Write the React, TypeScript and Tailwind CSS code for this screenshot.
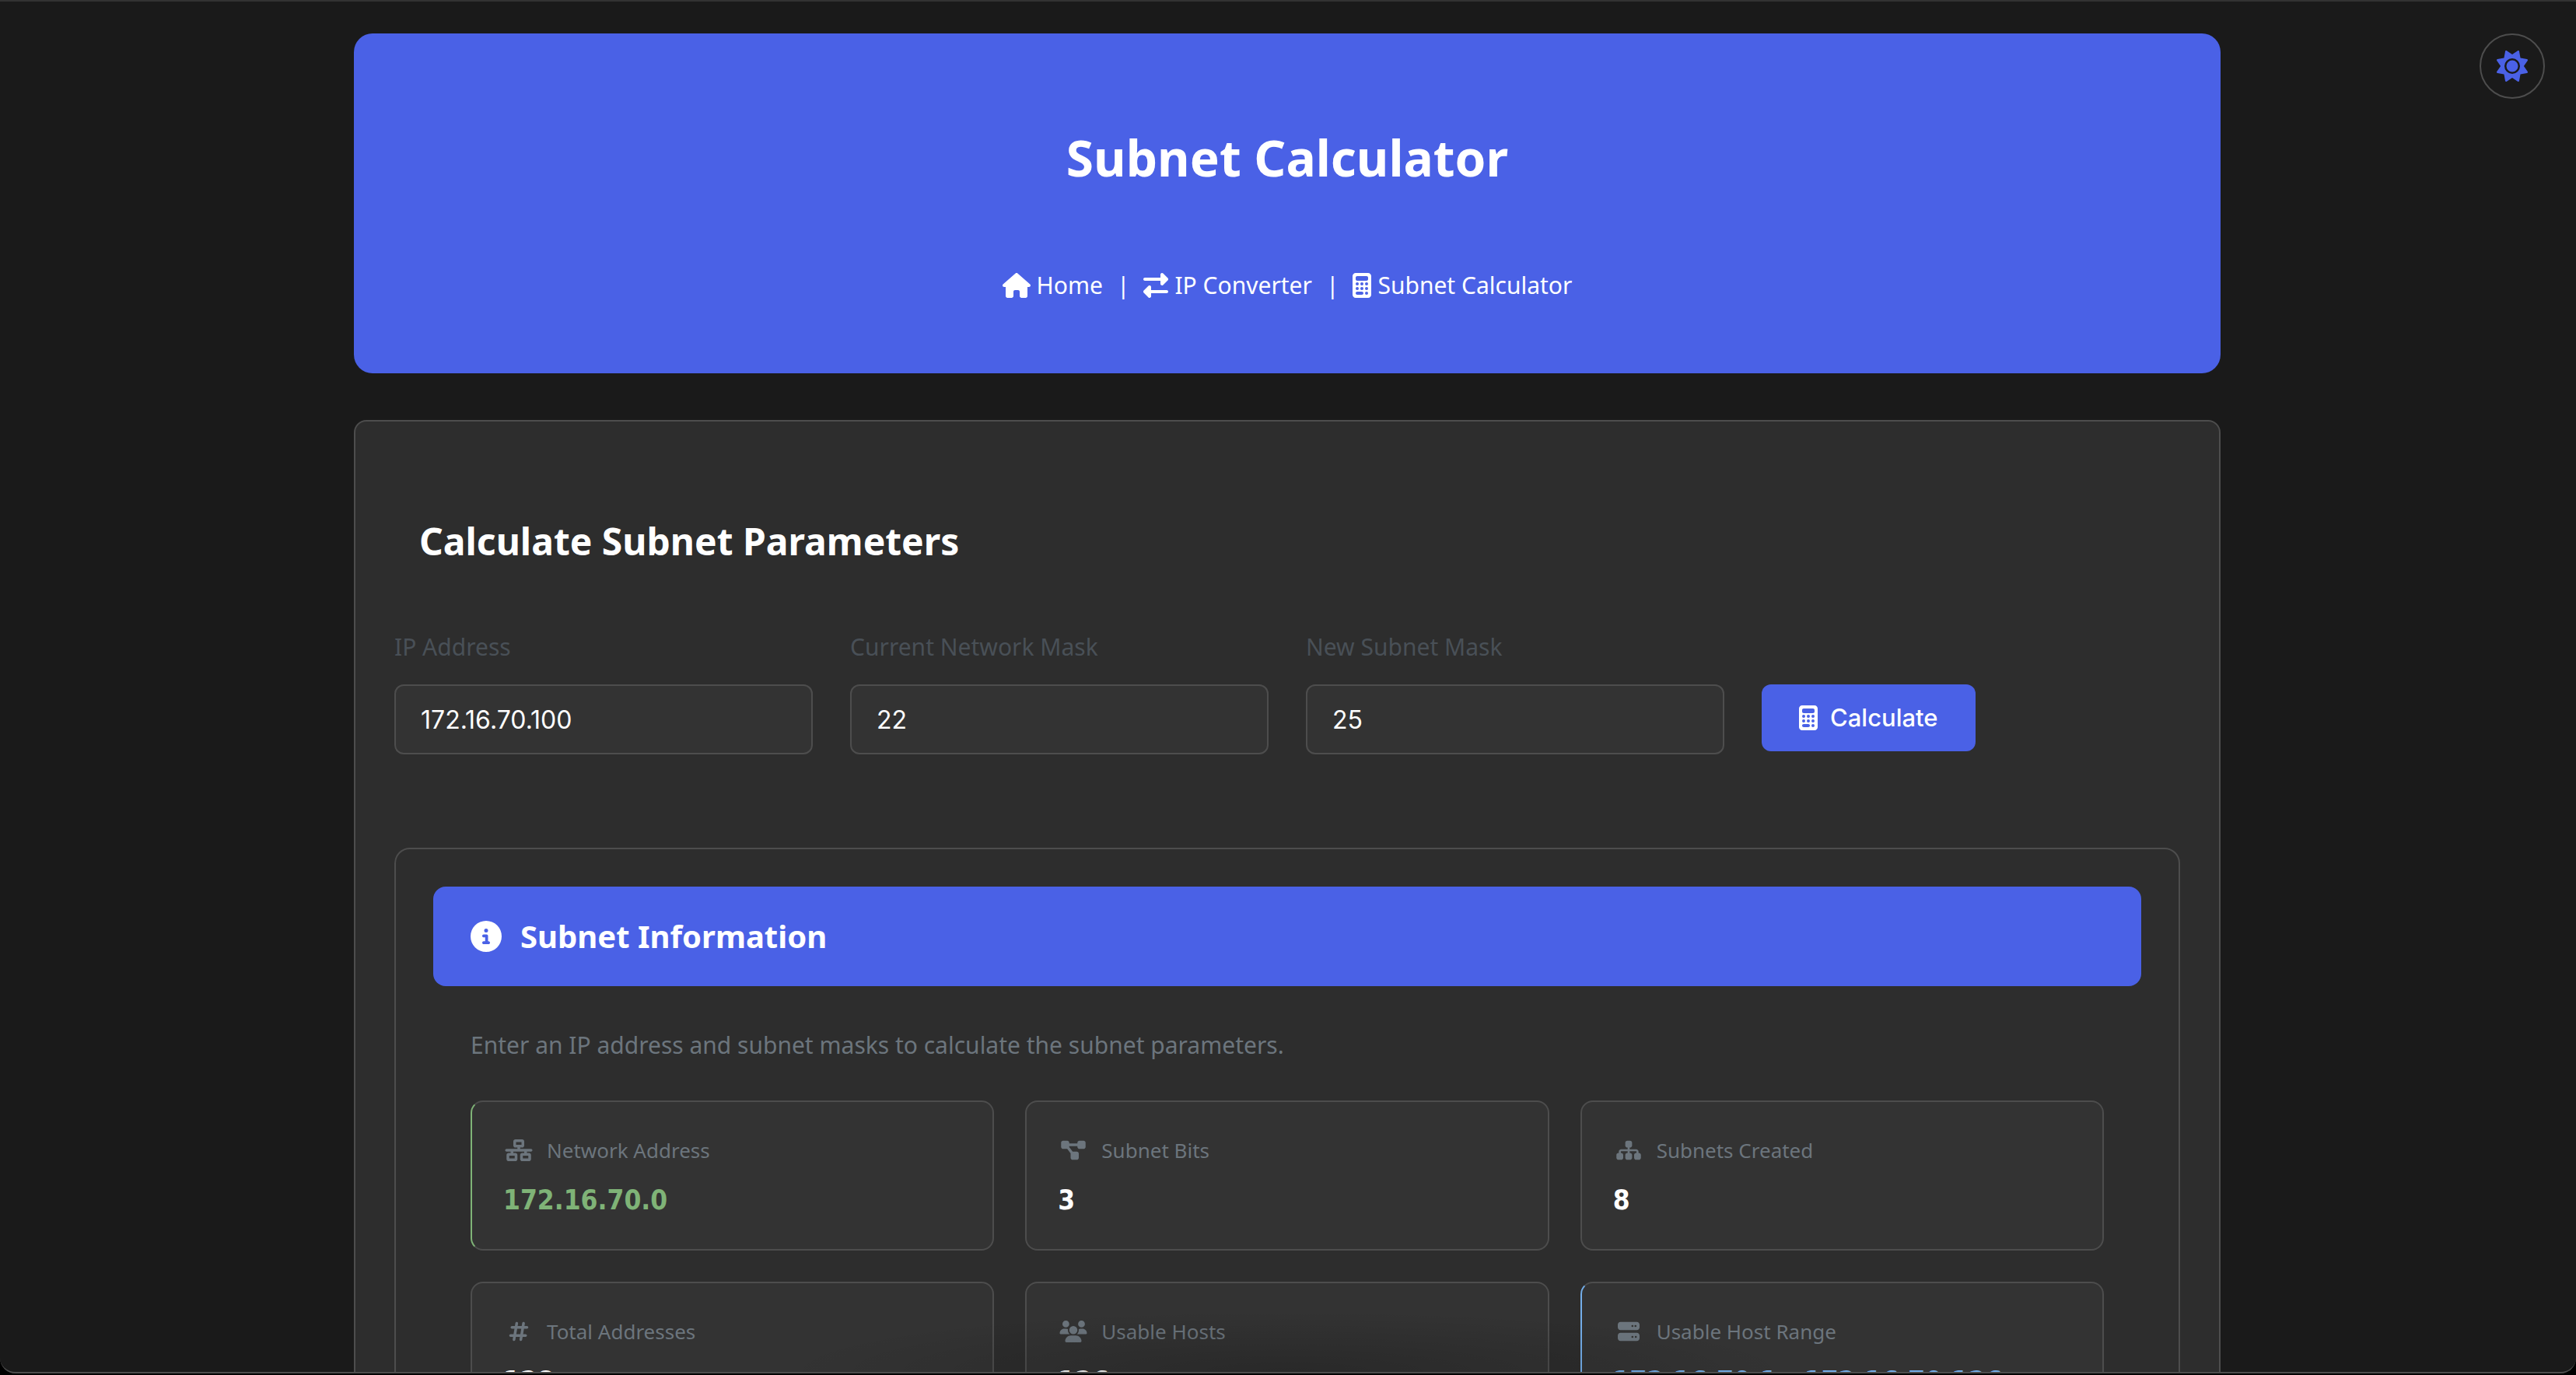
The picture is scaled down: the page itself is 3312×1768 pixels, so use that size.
import type { ComponentType } from "react";
import {
  FaCalculator,
  FaCircleInfo,
  FaDiagramProject,
  FaHashtag,
  FaHouse,
  FaNetworkWired,
  FaRightLeft,
  FaServer,
  FaSitemap,
  FaSun,
  FaUsers,
} from "react-icons/fa6";

type Tone = "plain" | "green" | "blue";

interface Stat {
  label: string;
  value: string;
  icon: ComponentType<{ className?: string }>;
  tone: Tone;
}

const stats: Stat[] = [
  { label: "Network Address", value: "172.16.70.0", icon: FaNetworkWired, tone: "green" },
  { label: "Subnet Bits", value: "3", icon: FaDiagramProject, tone: "plain" },
  { label: "Subnets Created", value: "8", icon: FaSitemap, tone: "plain" },
  { label: "Total Addresses", value: "128", icon: FaHashtag, tone: "plain" },
  { label: "Usable Hosts", value: "126", icon: FaUsers, tone: "plain" },
  { label: "Usable Host Range", value: "172.16.70.1 - 172.16.70.126", icon: FaServer, tone: "blue" },
];

const edge: Record<Tone, string> = {
  plain: "border-l-[#4d4d4d]",
  green: "border-l-[#7fb377]",
  blue: "border-l-[#74aeea]",
};

const ink: Record<Tone, string> = {
  plain: "text-white",
  green: "text-[#7fb377]",
  blue: "text-[#74aeea]",
};

const fields = [
  { id: "ip", label: "IP Address", value: "172.16.70.100" },
  { id: "mask", label: "Current Network Mask", value: "22" },
  { id: "subnet", label: "New Subnet Mask", value: "25" },
];

function StatCard({ label, value, icon: Icon, tone }: Stat) {
  return (
    <div
      className={`rounded-2xl border-2 border-[#4d4d4d] bg-[#333333] px-10 pt-10 pb-[34px] ${edge[tone]}`}
    >
      <div className="flex items-center gap-4 text-[26px] leading-[44px] text-[#6c757d]">
        <span className="flex w-10 justify-center">
          <Icon className="h-7 w-9" />
        </span>
        <span>{label}</span>
      </div>
      <div
        className={`mt-[14px] font-['DejaVu_Sans_Condensed','DejaVu_Sans',sans-serif] text-[35px] leading-[57px] font-bold ${ink[tone]}`}
      >
        {value}
      </div>
    </div>
  );
}

export default function App() {
  return (
    <div className="relative h-screen overflow-hidden bg-black font-['Noto_Sans',sans-serif] text-[30px] leading-[52px] text-white">
      <div className="h-[1766px] overflow-hidden rounded-b-[20px] bg-[#1a1a1a] pr-0.5">
        <button
          type="button"
          aria-label="Toggle theme"
          className="absolute top-[43px] right-10 flex size-[84px] items-center justify-center rounded-full border-2 border-[#4d4d4d] text-[#4a61e6]"
        >
          <FaSun className="size-10" />
        </button>

        <main className="mx-auto max-w-[2400px] pt-[43px]">
          <header className="flex flex-col items-center rounded-3xl bg-[#4a61e6] pt-[108px] pb-[87px]">
            <h1 className="text-[64px] leading-[104px] font-bold">Subnet Calculator</h1>
            <nav className="mt-[86px] flex items-center gap-[18px]">
              <a href="#home" className="flex items-center gap-2">
                <FaHouse className="h-8 w-9" />
                Home
              </a>
              <span>|</span>
              <a href="#converter" className="flex items-center gap-2">
                <FaRightLeft className="size-8" />
                IP Converter
              </a>
              <span>|</span>
              <a href="#subnet" className="flex items-center gap-2">
                <FaCalculator className="h-8 w-6" />
                Subnet Calculator
              </a>
            </nav>
          </header>

          <section className="mt-[60px] rounded-2xl border-2 border-[#4d4d4d] bg-[#2d2d2d] px-[50px] pt-[116px] pb-12">
            <h2 className="px-8 text-5xl leading-[76px] font-bold">Calculate Subnet Parameters</h2>

            <form className="mt-[72px] flex items-start gap-12" onSubmit={(e) => e.preventDefault()}>
              {fields.map((f) => (
                <div key={f.id} className="flex w-[538px] flex-col gap-[22px]">
                  <label htmlFor={f.id} className="text-[#495057]">
                    {f.label}
                  </label>
                  <input
                    id={f.id}
                    defaultValue={f.value}
                    className="h-[90px] w-full rounded-xl border-2 border-[#4d4d4d] bg-[#333333] px-8 font-[Inter,sans-serif] text-[32px]"
                  />
                </div>
              ))}
              <button
                type="submit"
                className="mt-[74px] flex h-[86px] items-center gap-4 rounded-xl bg-[#4a61e6] px-12 font-[Inter,sans-serif] text-[31px] font-medium"
              >
                <FaCalculator className="h-8 w-6" />
                Calculate
              </button>
            </form>

            <div className="mt-[120px] rounded-[20px] border-2 border-[#4d4d4d] p-12">
              <div className="flex h-32 items-center gap-6 rounded-2xl bg-[#4a61e6] px-12 text-[40px] font-bold">
                <FaCircleInfo className="size-10" />
                <h3>Subnet Information</h3>
              </div>
              <div className="px-12">
                <p className="mt-[50px] text-[#6c757d]">
                  Enter an IP address and subnet masks to calculate the subnet parameters.
                </p>
                <div className="mt-[45px] grid grid-cols-3 gap-10">
                  {stats.map((s) => (
                    <StatCard key={s.label} {...s} />
                  ))}
                </div>
              </div>
            </div>
          </section>
        </main>
      </div>
      <div className="pointer-events-none absolute inset-x-0 top-0 flex h-[1766px] items-end justify-center rounded-b-[20px] border-y-2 border-t-[#333333] border-b-[#4d4d4d]">
        <div className="h-20 w-2/5 bg-[radial-gradient(ellipse_at_bottom,rgba(0,0,0,0.2),transparent_70%)]" />
      </div>
    </div>
  );
}
